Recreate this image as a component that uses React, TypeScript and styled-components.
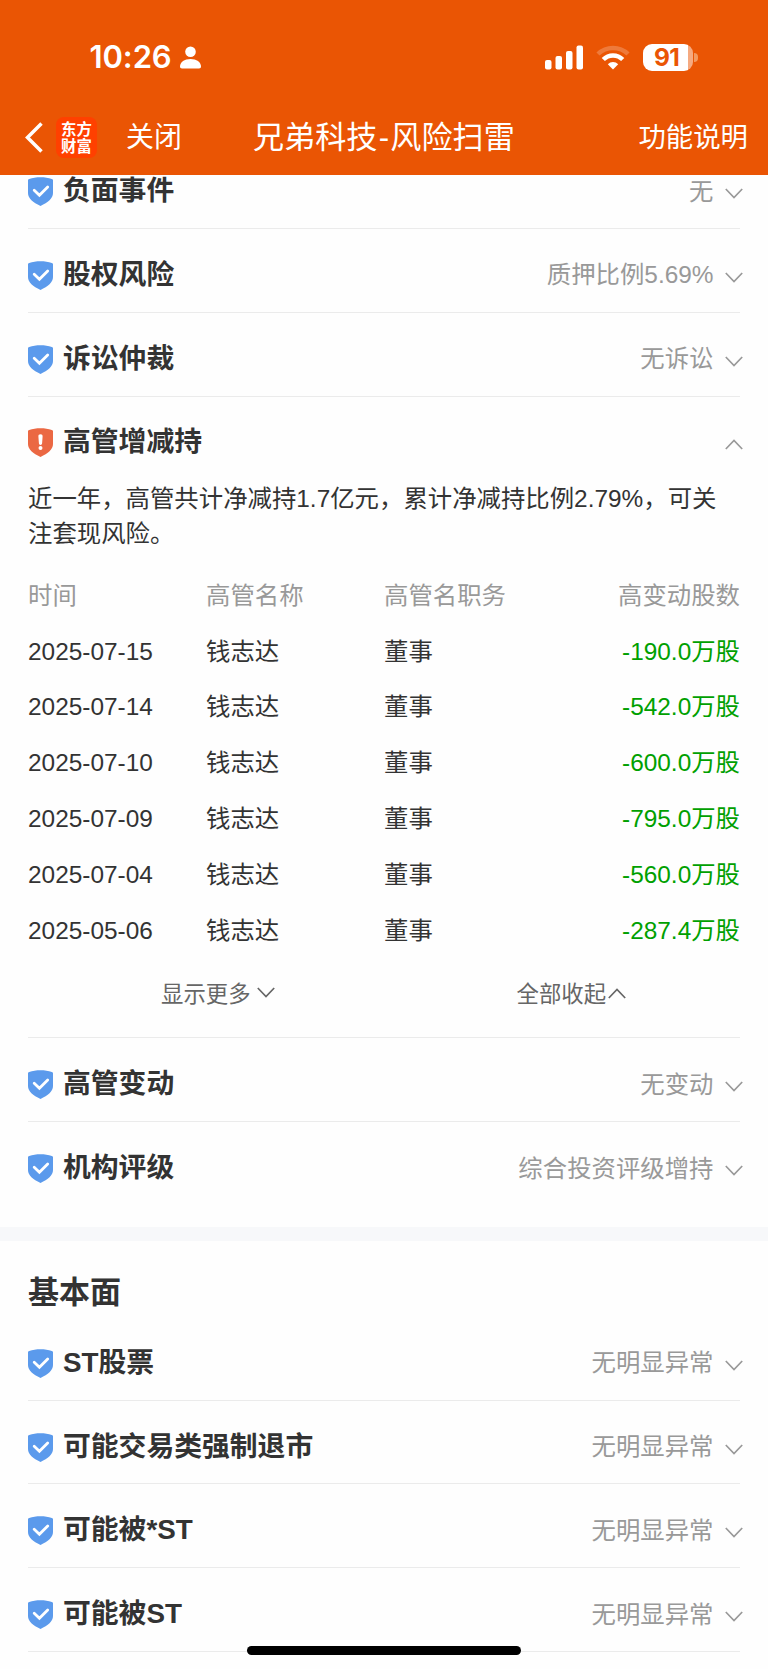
import React from "react";
import styled, { createGlobalStyle } from "styled-components";

const GlobalStyle = createGlobalStyle`
  * { box-sizing: border-box; }
  body {
    margin: 0;
    background: #fff;
    color: #333;
    font-family: "Liberation Sans", "Noto Sans CJK SC", sans-serif;
  }
`;

const Screen = styled.div`
  width: 768px;
  height: 1669px;
  display: flex;
  flex-direction: column;
  overflow: hidden;
  background: #fefefe;
`;

const Header = styled.header`
  flex: none;
  height: 175px;
  background: #ea5504;
  color: #fff;
`;

const StatusBar = styled.div`
  height: 100px;
  padding: 14px 70px 0 89.5px;
  display: flex;
  align-items: center;
  justify-content: space-between;
`;

const Clock = styled.div`
  display: flex;
  align-items: center;
  gap: 8px;
  font: 600 31px/36px Inter, sans-serif;
  letter-spacing: -0.1px;
`;

const StatusIcons = styled.div`
  display: flex;
  align-items: center;
  gap: 13px;
`;

const Battery = styled.div`
  display: flex;
  align-items: center;
  gap: 1px;
`;

const BatteryBody = styled.div`
  width: 50px;
  height: 27px;
  border-radius: 9px;
  background: linear-gradient(to right, #fff 45px, #f5aa81 45px);
  color: #ea5504;
  font: 700 24.5px/27px Inter, sans-serif;
  letter-spacing: -0.6px;
  padding-left: 11px;
`;

const BatteryTip = styled.div`
  width: 4px;
  height: 9px;
  border-radius: 0 4px 4px 0;
  background: #f3995f;
`;

const NavBar = styled.div`
  height: 74px;
  padding: 0 20px 0 25px;
  display: grid;
  grid-template-columns: 228px 1fr auto;
  align-items: center;
`;

const NavLeft = styled.div`
  display: flex;
  align-items: center;
`;

const AppLogo = styled.div`
  width: 41px;
  height: 41px;
  margin: 0 29px 0 13px;
  padding: 3px 5px;
  border-radius: 8px;
  background: #ff4000;
  font: 700 15.4px/17.5px "Noto Sans CJK SC", sans-serif;
`;

const NavAction = styled.span<{ $size: number }>`
  padding-top: 2px;
  font-size: ${(p) => p.$size}px;
  line-height: 40px;
`;

const NavTitle = styled.h1`
  margin: 0;
  padding-top: 2px;
  font-size: 31.1px;
  font-weight: 400;
  line-height: 40px;
`;

const Dash = styled.span`
  padding: 0 1.3px;
`;

const Content = styled.main`
  flex: 1;
  min-height: 0;
  overflow: hidden;
`;

const Group = styled.section<{ $offset?: number }>`
  padding: 0 28px;
  margin-top: ${(p) => p.$offset ?? 0}px;
`;

const Row = styled.div<{ $divided?: boolean }>`
  height: 83.75px;
  padding-top: 10px;
  border-bottom: 1px solid ${(p) => (p.$divided ? "#ebebeb" : "transparent")};
  display: flex;
  align-items: center;
`;

const RowTitle = styled.h3`
  flex: 1;
  margin: 0 0 1px 10px;
  font-size: 27.8px;
  font-weight: 600;
  line-height: 40px;
`;

const RowValue = styled.span`
  margin-right: 11.5px;
  color: #999;
  font-size: 24.4px;
  line-height: 36px;
`;

const RowArrow = styled.span`
  display: flex;
  margin: 4px -3px 0 0;
  color: #999;
`;

const Summary = styled.p`
  margin: 0;
  padding-top: 1.5px;
  font-size: 24.4px;
  line-height: 34.8px;
`;

const Table = styled.div`
  margin-top: 16.5px;
`;

const TableRow = styled.div<{ $head?: boolean }>`
  display: grid;
  grid-template-columns: repeat(4, 1fr);
  height: 55.8px;
  align-items: center;
  font-size: 24.4px;
  line-height: 36px;
  color: ${(p) => (p.$head ? "#999" : "#333")};
`;

const Amount = styled.span<{ $plain?: boolean }>`
  text-align: right;
  color: ${(p) => (p.$plain ? "inherit" : "#00a000")};
`;

const Actions = styled.div`
  height: 80px;
  padding-bottom: 6px;
  border-bottom: 1px solid #ebebeb;
  display: flex;
  align-items: center;
  color: #666;
  font-size: 22.4px;
  line-height: 32px;
`;

const Action = styled.div<{ $indent: number; $gap: number; $lift?: number }>`
  flex: 1;
  padding-left: ${(p) => p.$indent}px;
  display: flex;
  align-items: center;
  gap: ${(p) => p.$gap}px;

  svg {
    margin-bottom: ${(p) => p.$lift ?? 0}px;
  }
`;

const Band = styled.div`
  height: 14px;
  margin-top: 21px;
  background: #f7f8fa;
`;

const GroupTitle = styled.h2`
  margin: 0;
  padding-top: 30px;
  height: 76px;
  font-size: 31px;
  font-weight: 600;
  line-height: 44px;
`;

const HomeIndicator = styled.div`
  position: absolute;
  left: 247px;
  top: 1645.5px;
  width: 274px;
  height: 9px;
  border-radius: 5px;
  background: #000;
`;

const Shield = ({ alert }: { alert?: boolean }) => (
  <svg width="25" height="29" viewBox="0 0 25 29">
    <path
      d="M1.2 1.9C4.6.9 8.3.3 12.5.3s7.9.6 11.3 1.6c.8.2 1.2.6 1.2 1.4V16c0 5.500-5 9.200-12.500 13C5 25.200 0 21.500 0 16V3.300c0-.8.4-1.200 1.200-1.400z"
      fill={alert ? "#eb6843" : "#5b9aec"}
    />
    {alert ? (
      <path
        d="M12.500 6.300c1.500 0 2.200.9 2.100 2.200l-.5 6.800c-.1 1-.7 1.600-1.600 1.600s-1.500-.6-1.600-1.600l-.5-6.800c-.1-1.300.6-2.200 2.100-2.200zM12.500 18a2 2 0 1 1 0 4 2 2 0 0 1 0-4z"
        fill="#fff"
      />
    ) : (
      <path d="M6.200 13.300l5.200 4.900 8.300-8.300" fill="none" stroke="#fff" strokeWidth="2.800" strokeLinecap="round" />
    )}
  </svg>
);

const Chevron = ({ up }: { up?: boolean }) => (
  <svg width="18" height="11" viewBox="0 0 18 11" fill="none" stroke="currentColor" strokeWidth="1.700">
    <path d={up ? "M.8 10L9 1.500l8.200 8.500" : "M.8 1L9 9.500 17.200 1"} />
  </svg>
);

type Risk = { title: string; value?: string; alert?: boolean; last?: boolean };

const RiskRow = ({ title, value, alert, last }: Risk) => (
  <Row $divided={!last && !alert}>
    <Shield alert={alert} />
    <RowTitle>{title}</RowTitle>
    {value && <RowValue>{value}</RowValue>}
    <RowArrow>
      <Chevron up={alert} />
    </RowArrow>
  </Row>
);

const trades = [
  ["2025-07-15", "-190.0万股"],
  ["2025-07-14", "-542.0万股"],
  ["2025-07-10", "-600.0万股"],
  ["2025-07-09", "-795.0万股"],
  ["2025-07-04", "-560.0万股"],
  ["2025-05-06", "-287.4万股"],
];

const fundamentals = ["ST股票", "可能交易类强制退市", "可能被*ST", "可能被ST"];

export default function App() {
  return (
    <Screen>
      <GlobalStyle />
      <Header>
        <StatusBar>
          <Clock>
            10:26
            <svg width="21" height="23" viewBox="0 0 21 23" fill="#fff">
              <circle cx="10.500" cy="5.700" r="5.300" />
              <path d="M0 20.500C0 16 4.500 13 10.500 13S21 16 21 20.500c0 1.300-.7 2-2 2H2c-1.300 0-2-.7-2-2z" />
            </svg>
          </Clock>
          <StatusIcons>
            <svg width="38" height="25" viewBox="0 0 38 25" fill="#fff">
              <rect x="0" y="15" width="6.500" height="9.500" rx="2" />
              <rect x="10.500" y="11" width="6.500" height="13.500" rx="2" />
              <rect x="21" y="6" width="6.500" height="18.500" rx="2" />
              <rect x="31.500" y="0.500" width="6.500" height="24" rx="2" />
            </svg>
            <svg width="34" height="25" viewBox="0 0 34 25" fill="none" stroke="#fff" strokeWidth="4.500">
              <path d="M2 9a21.500 21.500 0 0 1 30 0" opacity=".22" />
              <path d="M7.300 14.500a13.700 13.700 0 0 1 19.400 0" />
              <path d="M17 24.500l-5.200-5.200a7.300 7.300 0 0 1 10.400 0z" fill="#fff" stroke="none" />
            </svg>
            <Battery>
              <BatteryBody>91</BatteryBody>
              <BatteryTip />
            </Battery>
          </StatusIcons>
        </StatusBar>
        <NavBar>
          <NavLeft>
            <svg width="18" height="31" viewBox="0 0 18 31" fill="none" stroke="#fff" strokeWidth="3.500">
              <path d="M16.500 1.500L2.500 15.500l14 14" />
            </svg>
            <AppLogo>东方财富</AppLogo>
            <NavAction $size={27.9}>关闭</NavAction>
          </NavLeft>
          <NavTitle>
            兄弟科技<Dash>-</Dash>风险扫雷
          </NavTitle>
          <NavAction $size={27.4}>功能说明</NavAction>
        </NavBar>
      </Header>
      <Content>
        <Group $offset={-29.75}>
          <RiskRow title="负面事件" value="无" />
          <RiskRow title="股权风险" value="质押比例5.69%" />
          <RiskRow title="诉讼仲裁" value="无诉讼" />
          <RiskRow title="高管增减持" alert />
          <Summary>
            近一年，高管共计净减持1.7亿元，累计净减持比例2.79%，可关注套现风险。
          </Summary>
          <Table>
            <TableRow $head>
              <span>时间</span>
              <span>高管名称</span>
              <span>高管名职务</span>
              <Amount $plain>高变动股数</Amount>
            </TableRow>
            {trades.map(([date, amount]) => (
              <TableRow key={date}>
                <span>{date}</span>
                <span>钱志达</span>
                <span>董事</span>
                <Amount>{amount}</Amount>
              </TableRow>
            ))}
          </Table>
          <Actions>
            <Action $indent={133} $gap={6} $lift={5}>
              显示更多
              <Chevron />
            </Action>
            <Action $indent={132} $gap={2} $lift={2}>
              全部收起
              <Chevron up />
            </Action>
          </Actions>
          <RiskRow title="高管变动" value="无变动" />
          <RiskRow title="机构评级" value="综合投资评级增持" last />
        </Group>
        <Band />
        <Group>
          <GroupTitle>基本面</GroupTitle>
          {fundamentals.map((title) => (
            <RiskRow key={title} title={title} value="无明显异常" />
          ))}
        </Group>
      </Content>
      <HomeIndicator />
    </Screen>
  );
}
